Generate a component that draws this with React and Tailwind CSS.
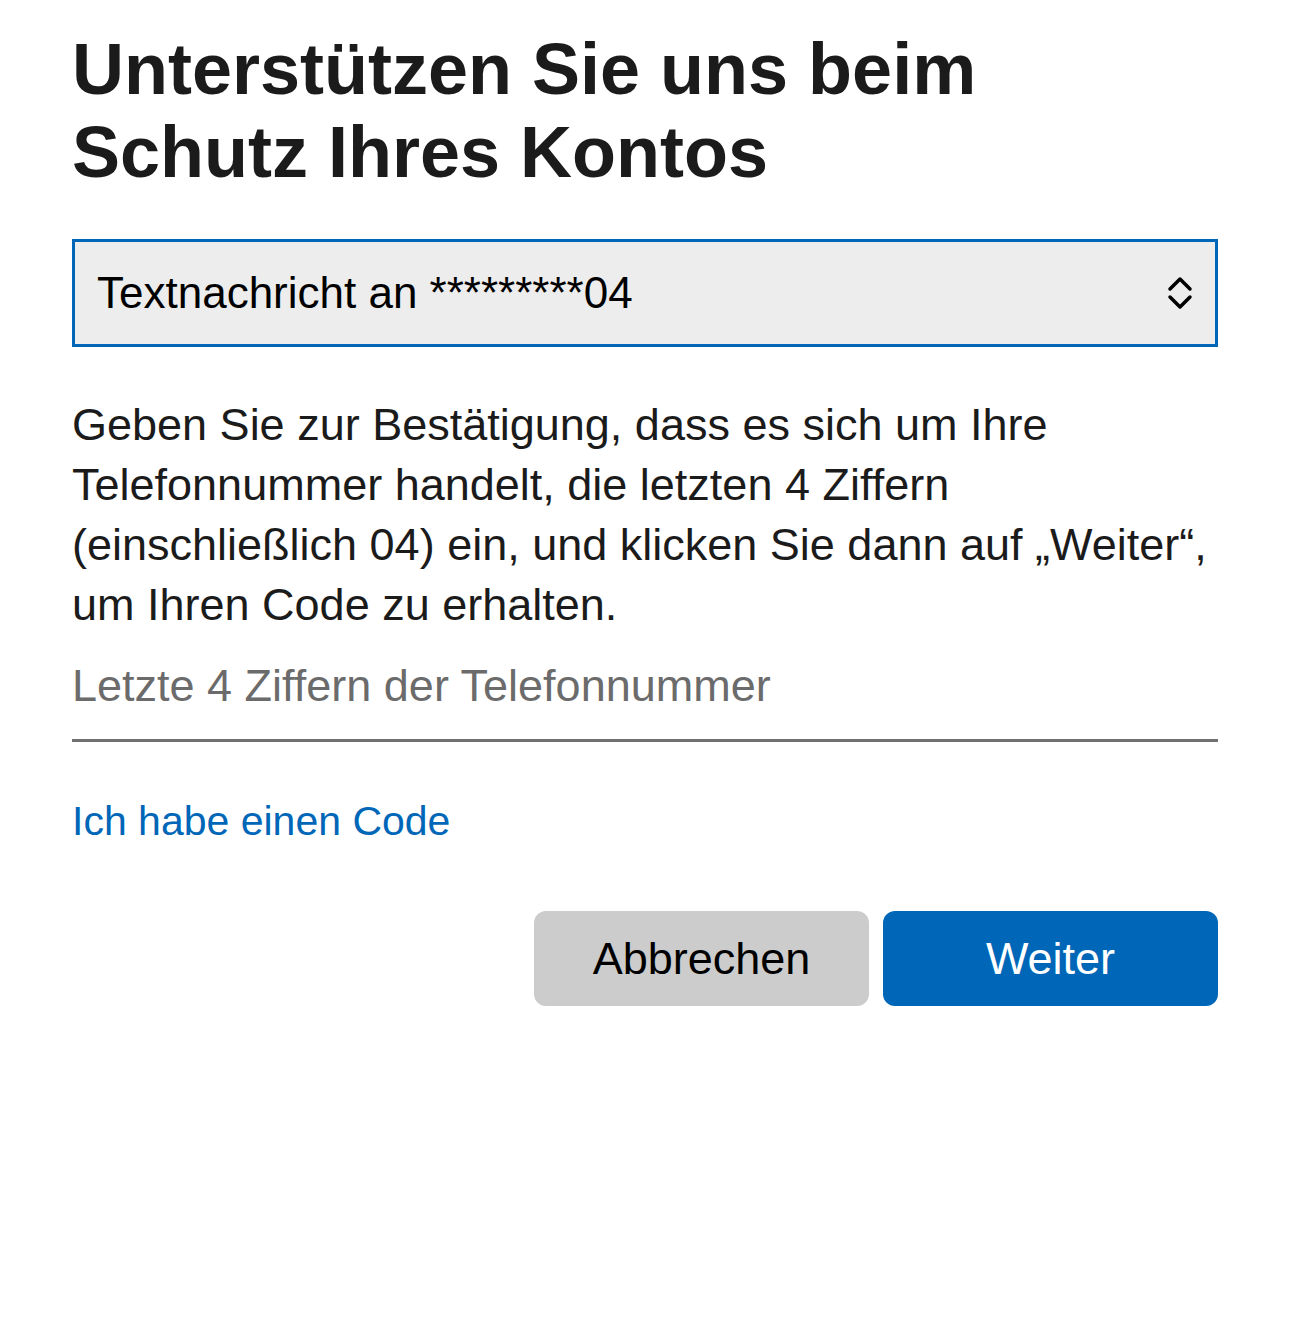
export default function App() {
    return (
        <div className="min-h-screen bg-white font-['Liberation_Sans',Arial,sans-serif] text-[#1b1b1b]">
            <div className="px-[72px] pt-[28px]">
                {/* Heading */}
                <h1 className="text-[72px] leading-[83px] font-bold">
                    Unterstützen Sie uns beim
                    <br />
                    Schutz Ihres Kontos
                </h1>

                {/* Method select */}
                <div className="mt-[45px] h-[108px] border-[3px] border-[#0067b8] bg-[#ededed] pl-[22px] pr-[22px] flex items-center justify-between">
                    <span className="text-[44px] leading-none text-black">Textnachricht an *********04</span>
                    <svg width="26" height="34" viewBox="0 0 26 34" fill="none" stroke="black" strokeWidth="3.5" strokeLinecap="round" strokeLinejoin="round">
                        <path d="M3 13 L13 3 L23 13" />
                        <path d="M3 21 L13 31 L23 21" />
                    </svg>
                </div>

                {/* Description */}
                <p className="mt-[48px] text-[45px] leading-[60px]">
                    <span className="block whitespace-nowrap">Geben Sie zur Bestätigung, dass es sich um Ihre</span>
                    <span className="block whitespace-nowrap">Telefonnummer handelt, die letzten 4 Ziffern</span>
                    <span className="block whitespace-nowrap">(einschließlich 04) ein, und klicken Sie dann auf „Weiter“,</span>
                    <span className="block whitespace-nowrap">um Ihren Code zu erhalten.</span>
                </p>

                {/* Digits input */}
                <input
                    type="text"
                    placeholder="Letzte 4 Ziffern der Telefonnummer"
                    className="mt-[21px] block w-full h-[86px] pb-[23px] bg-transparent outline-none border-b-[3px] border-[#707070] text-[45px] leading-[60px] placeholder:text-[#6b6b6b]"
                />

                <a href="#" className="mt-[54px] block w-fit text-[41px] leading-[50px] text-[#0067b8]">
                    Ich habe einen Code
                </a>

                {/* Actions */}
                <div className="mt-[65px] flex justify-end gap-[14px]">
                    <button className="w-[335px] h-[95px] rounded-[12px] bg-[#cccccc] text-[45px] text-black">
                        Abbrechen
                    </button>
                    <button className="w-[335px] h-[95px] rounded-[12px] bg-[#0067b8] text-[45px] text-white">
                        Weiter
                    </button>
                </div>
            </div>
        </div>
    );
}
